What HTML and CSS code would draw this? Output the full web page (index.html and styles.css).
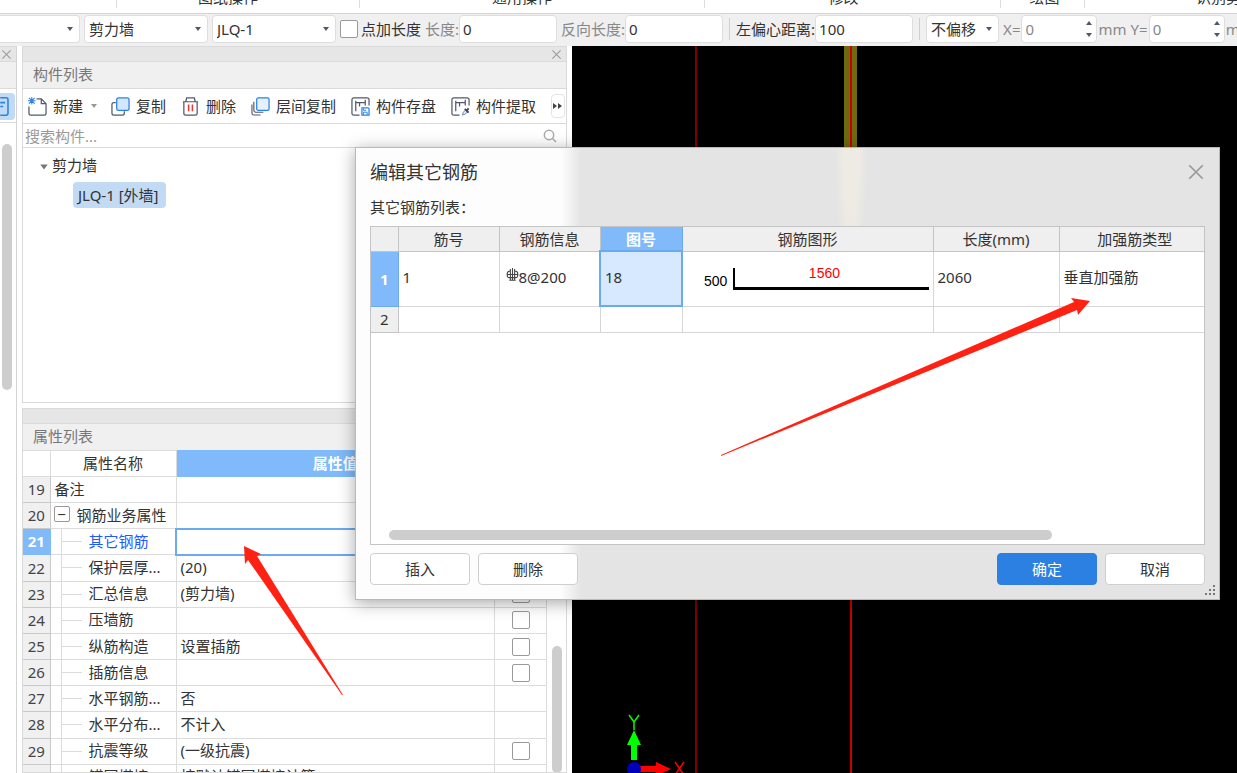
FILE: index.html
```html
<!DOCTYPE html>
<html lang="zh-CN">
<head>
<meta charset="utf-8">
<title>编辑其它钢筋</title>
<link rel="stylesheet" href="styles.css">
</head>
<body>
<svg class="defs" aria-hidden="true">
  <symbol id="down" viewBox="0 0 8 6"><path d="M1 1h6L4 5z" fill="currentColor"/></symbol>
  <symbol id="up" viewBox="0 0 8 6"><path d="M1 5h6L4 1z" fill="currentColor"/></symbol>
  <symbol id="close" viewBox="0 0 16 16"><path d="M2 2l12 12M14 2L2 14" fill="none" stroke="currentColor" stroke-width="1.5"/></symbol>
</svg>

<div class="ribbon">
  <div class="group g1"></div>
  <div class="group g2">图纸操作</div>
  <div class="group g3">通用操作</div>
  <div class="group g4">修改</div>
  <div class="group g5">绘图</div>
  <div class="group g6">识别剪力墙</div>
</div>

<div class="options">
  <div class="combo floor"><select aria-label="楼层"><option></option></select><svg><use href="#down"/></svg></div>
  <div class="combo kind"><select aria-label="构件类型"><option>剪力墙</option></select><svg><use href="#down"/></svg></div>
  <div class="combo kind"><select aria-label="构件"><option>JLQ-1</option></select><svg><use href="#down"/></svg></div>
  <label class="check"><input type="checkbox">点加长度</label>
  <label class="field dim">长度:<input type="text" value="0"></label>
  <label class="field dim">反向长度:<input type="text" value="0"></label>
  <span class="sep"></span>
  <label class="field">左偏心距离:<input type="text" value="100"></label>
  <span class="sep"></span>
  <div class="combo shift"><select aria-label="偏移"><option>不偏移</option></select><svg><use href="#down"/></svg></div>
  <label class="spin">X=<span class="spinbox"><input type="text" value="0"><span class="steps"><svg><use href="#up"/></svg><svg><use href="#down"/></svg></span></span>mm</label>
  <label class="spin">Y=<span class="spinbox"><input type="text" value="0"><span class="steps"><svg><use href="#up"/></svg><svg><use href="#down"/></svg></span></span>mm</label>
</div>

<div class="workspace">
  <aside class="dock">
    <div class="grip"><button class="x" aria-label="关闭"><svg><use href="#close"/></svg></button></div>
    <div class="caption"></div>
    <div class="dock-tools"><button class="active" aria-label="列表"><svg viewBox="0 0 15 28"><path d="M0 5h6q2 0 2 2v14q0 2-2 2H0M0 10h5M0 14h3" fill="none" stroke="#2a82e4" stroke-width="1.6"/></svg></button></div>
    <div class="dock-body"><span class="thumb"></span></div>
  </aside>

  <div class="panels">
    <section class="panel components">
      <div class="grip"><button class="x" aria-label="关闭"><svg><use href="#close"/></svg></button></div>
      <h2 class="caption">构件列表</h2>
      <div class="tools">
        <button><svg viewBox="0 0 20 20"><path d="M1 10v7q0 2 2 2h14q2 0 2-2V7l-5-5H9M14 2v5h5" fill="none" stroke="#51586a" stroke-width="1.3"/><path d="M1 1l6 6M7 1L1 7M4 0v8M0 4h8" stroke="#2a82e4" stroke-width="1.1"/></svg>新建</button>
        <svg class="more"><use href="#down"/></svg>
        <button><svg viewBox="0 0 20 20"><path d="M5 6H3q-2 0-2 2v9q0 2 2 2h9q2 0 2-2v-2" fill="none" stroke="#51586a" stroke-width="1.3"/><rect x="6" y="1" width="13" height="13" rx="2" fill="#d5e7fc" stroke="#2a82e4" stroke-width="1.3"/></svg>复制</button>
        <button><svg viewBox="0 0 20 20"><path d="M2 5h16M5 5l1-4h8l1 4M3 5v12q0 2 2 2h10q2 0 2-2V5" fill="none" stroke="#51586a" stroke-width="1.3"/><path d="M8 8v7M12 8v7" stroke="#e33" stroke-width="1.6"/></svg>删除</button>
        <button><svg viewBox="0 0 20 20"><path d="M3 5v9q0 2 2 2h8M1 8v9q0 2 2 2h7" fill="none" stroke="#51586a" stroke-width="1.2"/><rect x="6" y="1" width="13" height="13" rx="1.5" fill="#e6f1fd" stroke="#2a82e4" stroke-width="1.3"/></svg>层间复制</button>
        <button><svg viewBox="0 0 20 20"><path d="M9 19H3q-2 0-2-2V3q0-2 2-2h14q2 0 2 2v6M5 4v11M5 6h10M15 3v6M9 6v4" fill="none" stroke="#51586a" stroke-width="1.3"/><path d="M11.500 11.500h6.500l1 1v6.500h-7.500z" fill="#fff" stroke="#2a82e4" stroke-width="1.300"/><path d="M13 19v-3h4v3M13 12v2h3" fill="none" stroke="#2a82e4"/></svg>构件存盘</button>
        <button><svg viewBox="0 0 20 20"><path d="M9 19H3q-2 0-2-2V3q0-2 2-2h14q2 0 2 2v6M5 4v11M5 6h10M15 3v6M9 6v4" fill="none" stroke="#51586a" stroke-width="1.3"/><path d="M12 19l1-3 3-3 2 2-3 3z" fill="#dceafb" stroke="#6b86b0"/><path d="M14.500 12.500l4 4M16.500 14.500l2-2.500" stroke="#3f4658" stroke-width="2"/></svg>构件提取</button>
        <button class="overflow" aria-label="更多"><svg viewBox="0 0 10 6"><path d="M0 0l4 3-4 3zM5 0l4 3-4 3z" fill="#444"/></svg></button>
      </div>
      <div class="search"><input type="text" placeholder="搜索构件..." aria-label="搜索构件"><svg viewBox="0 0 14 14"><circle cx="6" cy="6" r="4.700" fill="none" stroke="#aaa" stroke-width="1.500"/><path d="M9.500 9.500L13 13" stroke="#aaa" stroke-width="1.500"/></svg></div>
      <ul class="tree">
        <li><svg class="twisty"><use href="#down"/></svg>剪力墙
          <ul><li><span class="picked">JLQ-1 [外墙]</span></li></ul>
        </li>
      </ul>
    </section>

    <section class="panel props">
      <div class="grip"></div>
      <h2 class="caption">属性列表</h2>
      <div class="prop-body">
        <table class="prop-table">
          <colgroup><col class="c-num"><col class="c-name"><col><col class="c-add"></colgroup>
          <thead><tr><th></th><th>属性名称</th><th class="on">属性值</th><th>附加</th></tr></thead>
          <tbody>
            <tr><th>19</th><td>备注</td><td></td><td></td></tr>
            <tr><th>20</th><td><button class="fold" aria-label="折叠">−</button>钢筋业务属性</td><td></td><td></td></tr>
            <tr class="current"><th>21</th><td class="child">其它钢筋</td><td class="edit"></td><td></td></tr>
            <tr><th>22</th><td class="child">保护层厚...</td><td>(20)</td><td><input type="checkbox" aria-label="保护层厚"></td></tr>
            <tr><th>23</th><td class="child">汇总信息</td><td>(剪力墙)</td><td><input type="checkbox" aria-label="汇总信息"></td></tr>
            <tr><th>24</th><td class="child">压墙筋</td><td></td><td><input type="checkbox" aria-label="压墙筋"></td></tr>
            <tr><th>25</th><td class="child">纵筋构造</td><td>设置插筋</td><td><input type="checkbox" aria-label="纵筋构造"></td></tr>
            <tr><th>26</th><td class="child">插筋信息</td><td></td><td><input type="checkbox" aria-label="插筋信息"></td></tr>
            <tr><th>27</th><td class="child">水平钢筋...</td><td>否</td><td></td></tr>
            <tr><th>28</th><td class="child">水平分布...</td><td>不计入</td><td></td></tr>
            <tr><th>29</th><td class="child">抗震等级</td><td>(一级抗震)</td><td><input type="checkbox" aria-label="抗震等级"></td></tr>
            <tr><th>30</th><td class="child">锚固搭接</td><td>按默认锚固搭接计算</td><td></td></tr>
          </tbody>
        </table>
        <div class="track"><span class="thumb"></span></div>
      </div>
    </section>
  </div>

  <main class="canvas">
    <span class="axis a1"></span>
    <span class="wall"></span>
    <span class="axis a2"></span>
    <svg class="ucs" viewBox="0 0 60 60">
      <path d="M12 45V24" stroke="#0f0" stroke-width="6"/><path d="M5 30L12 15l7 15z" fill="#0f0"/>
      <path d="M18 54h20" stroke="#f00" stroke-width="6"/><path d="M34 47l15 7-15 7z" fill="#f00"/>
      <circle cx="12" cy="54" r="7" fill="#00b"/>
      <path d="M7 0l5 7 5-7M12 7v8" fill="none" stroke="#0f0" stroke-width="1.500"/>
      <path d="M53 47l9 13M62 47l-9 13" fill="none" stroke="#f00" stroke-width="1.500"/>
    </svg>
  </main>
</div>

<div class="dialog" role="dialog" aria-labelledby="dlg-title">
  <header><h1 id="dlg-title">编辑其它钢筋</h1><button class="x" aria-label="关闭"><svg><use href="#close"/></svg></button></header>
  <p>其它钢筋列表：</p>
  <div class="frame">
    <table class="bars">
      <colgroup><col class="b-num"><col class="b-id"><col class="b-id"><col class="b-fig"><col><col class="b-len"><col class="b-type"></colgroup>
      <thead><tr><th></th><th>筋号</th><th>钢筋信息</th><th class="on">图号</th><th>钢筋图形</th><th>长度(mm)</th><th>加强筋类型</th></tr></thead>
      <tbody>
        <tr class="tall"><th class="on">1</th><td>1</td>
          <td><svg class="rebar" viewBox="0 0 12 14"><path d="M4 3H3Q1 3 1 6t2 3h6q2 0 2-3T9 3H8M4 1v10M6 0v12M8 1v10M1 6h10M3 11.500h6" stroke="#444" fill="none"/></svg>8@200</td>
          <td class="cell-on">18</td>
          <td class="shape"><div class="bar"><span class="hook">500</span><span class="run">1560</span></div></td>
          <td>2060</td><td>垂直加强筋</td></tr>
        <tr><th>2</th><td></td><td></td><td></td><td></td><td></td><td></td></tr>
      </tbody>
    </table>
    <div class="hscroll"><span></span></div>
  </div>
  <footer>
    <button>插入</button><button>删除</button><span class="grow"></span><button class="primary">确定</button><button>取消</button>
  </footer>
  <svg class="resize" viewBox="0 0 12 12"><path d="M8 0h2v2H8zM4 4h2v2H4zM8 4h2v2H8zM0 8h2v2H0zM4 8h2v2H4zM8 8h2v2H8z" fill="#777"/></svg>
</div>

<svg class="marks" aria-hidden="true">
  <path d="M721 455L1074 302l-3-4 19 3-12 14-1-5L721 456zM244 546l17 8-4 2 86 139h-1L248 560l-3 4z" fill="#ff2213"/>
</svg>
</body>
</html>
```

FILE: styles.css
```css
* { box-sizing: border-box; }
body {
  margin: 0; height: 100vh; display: flex; flex-direction: column; overflow: hidden; position: relative;
  font: 15px/20px "Noto Sans", "Noto Sans CJK SC", sans-serif; color: #333; background: #fff;
}
button, input, select { font: inherit; color: inherit; margin: 0; }
button { border: 0; background: none; padding: 0; }
h1, h2, p, ul { margin: 0; padding: 0; font-weight: 400; list-style: none; }
.defs { position: absolute; width: 0; height: 0; }

.ribbon { display: flex; height: 14px; flex: none; align-items: flex-end; overflow: hidden; border-bottom: 1px solid #d4d4d4; padding-bottom: 5px; }
.group { height: 20px; border-right: 1px solid #dcdcdc; text-align: center; flex: none; line-height: 18px; white-space: nowrap; }
.g1 { width: 117px; } .g2 { width: 243px; padding-right: 20px; } .g3 { width: 345px; padding-right: 20px; }
.g4 { width: 296px; padding-right: 18px; } .g5 { width: 84px; padding-left: 4px; } .g6 { width: 186px; text-align: left; padding-left: 111px; }

.options { display: flex; flex: none; align-items: center; height: 32px; background: #f0f0f0; gap: 4px; overflow: hidden; white-space: nowrap; padding-bottom: 2px; }
.options > * { flex: none; }
.combo { position: relative; height: 28px; }
.combo select { appearance: none; width: 100%; height: 100%; border: 1px solid #dedede; border-radius: 4px; background: #fff; padding: 0 4px; }
.combo svg { position: absolute; right: 6px; top: 11px; width: 8px; height: 6px; color: #51586a; pointer-events: none; }
.floor { width: 80px; } .floor select { border-left: 0; border-radius: 0 4px 4px 0; }
.kind { width: 124px; } .shift { width: 73px; }
.check { display: flex; align-items: center; gap: 3px; }
input[type=checkbox] { appearance: none; width: 18px; height: 18px; border: 1px solid #999; border-radius: 2px; background: #fff; }
.field { display: flex; align-items: center; }
.dim { color: #888; }
.field input { width: 98px; height: 28px; border: 1px solid #dedede; border-radius: 4px; background: #fff; padding: 0 3px; color: #333; }
.sep { width: 1px; height: 22px; background: #cfcfcf; margin: 0 2px; }
.spin { display: flex; align-items: center; color: #888; gap: 1px; }
.spinbox { display: flex; width: 76px; height: 28px; border: 1px solid #dedede; border-radius: 4px; background: #fff; align-items: center; padding: 0 3px; }
.spinbox input { flex: 1; min-width: 0; border: 0; padding: 0; background: none; }
.steps { display: flex; flex-direction: column; gap: 6px; color: #51586a; }
.steps svg { width: 8px; height: 6px; display: block; }

.workspace { flex: 1; min-height: 0; display: flex; }
.grip { height: 16px; flex: none; background: #e6e6e6; border: 1px solid #dadada; border-width: 1px 0; display: flex; justify-content: flex-end; align-items: center; }
.x { display: flex; color: #999; }
.grip .x svg { width: 11px; height: 11px; }
.grip .x { margin-right: 4px; }
.caption { height: 27px; flex: none; background: #f0f0f0; color: #777; font-size: 15px; line-height: 24px; padding-left: 10px; border-bottom: 1px solid #dadada; }
.dock { width: 17px; flex: none; display: flex; flex-direction: column; border-right: 1px solid #d4d4d4; }
.dock-tools { height: 34px; border-bottom: 1px solid #dadada; padding-top: 4px; }
.active { display: block; width: 15px; height: 27px; background: #c2daf3; border-radius: 0 4px 4px 0; }
.active svg { display: block; width: 15px; height: 27px; }
.dock-body { flex: 1; padding: 21px 0 0 2px; }
.thumb { display: block; width: 10px; border-radius: 5px; background: #cdcdcd; }
.dock .thumb { height: 246px; }

.panels { width: 45%; max-width: 545px; flex: none; margin: 0 5px; display: flex; flex-direction: column; gap: 5px; }
.panel { border: 1px solid #dadada; border-top: 0; display: flex; flex-direction: column; }
.components { height: 357px; flex: none; }
.tools { height: 35px; flex: none; display: flex; align-items: center; border-bottom: 1px solid #dadada; padding: 0 1px 0 5px; white-space: nowrap; overflow: hidden; }
.tools button { display: flex; align-items: center; gap: 6px; flex: none; margin-right: 15px; }
.tools button svg { width: 19px; height: 19px; }
.tools button:first-child { margin-right: 7px; }
.more { width: 8px; height: 6px; margin-right: 13px; color: #999; flex: none; }
.tools .overflow { height: 24px; border: 1px solid #e4e4e4; border-radius: 4px; padding: 0 1px; margin: 0; }
.tools .overflow svg { width: 10px; height: 6px; }
.search { height: 24px; flex: none; display: flex; align-items: center; border-bottom: 1px solid #dadada; padding: 0 9px 0 2px; }
.search input { flex: 1; border: 0; padding: 0; outline: 0; min-width: 0; }
.search input::placeholder { color: #999; }
.search svg { width: 14px; height: 14px; }
.tree { padding: 7px 0 0 16px; }
.tree ul { padding: 7px 0 0 34px; }
.twisty { width: 10px; height: 8px; margin-right: 3px; color: #777; }
.picked { display: inline-block; background: #c2daf3; border-radius: 4px; padding: 3px 7px 3px 5px; }

.props { flex: 1; min-height: 0; overflow: hidden; }
.props .caption { border-bottom: 0; height: 26px; }
.prop-body { display: flex; align-items: flex-start; }
.prop-table { flex: 1; height: 341px; border-collapse: collapse; table-layout: fixed; width: 100%; }
.c-num { width: 27px; } .c-name { width: 126px; } .c-add { width: 52px; }
.prop-table th, .prop-table td { border: 1px solid #dcdcdc; padding: 0 4px 2px; line-height: 20px; height: 26px; font-weight: 400; text-align: left; white-space: nowrap; overflow: hidden; }
.prop-table thead th { text-align: center; }
.prop-table tr > :first-child { border-left: 0; }
.prop-table tbody th { background: #f0f0f0; text-align: center; padding: 0 0 1px; border-color: #c9c9c9; color: #444; }
.prop-table .on, .prop-table .current th { background: #80bafa; color: #fff; font-weight: 700; border-color: #80bafa; }
.prop-table td:last-child { text-align: center; padding: 0; }
.prop-table td input { display: block; margin: 0 auto; }
.prop-table .child { padding-left: 38px; background: linear-gradient(#dcdcdc, #dcdcdc) 11px 12px / 20px 1px no-repeat, linear-gradient(#dcdcdc, #dcdcdc) 10px 0 / 1px 100% no-repeat; }
.current .child { color: #1f5cff; }
.prop-table .edit { border: 2px solid #6aaaee; }
.fold { width: 16px; height: 16px; border: 1px solid #999; border-radius: 2px; line-height: 12px; vertical-align: 1px; margin: 0 7px 0 -1px; }
.track { width: 19px; padding: 196px 0 0 5px; }
.track .thumb { height: 127px; }

.canvas { flex: 1; position: relative; background: #000; overflow: hidden; }
.axis { position: absolute; top: 0; bottom: 0; width: 2px; background: #800000; }
.a1 { left: 123px; } .a2 { left: 278px; background: #c80000; }
.wall { position: absolute; left: 272px; top: 0; width: 13px; height: 180px; background: #6f6a12; }
.ucs { position: absolute; left: 50px; bottom: -2px; width: 60px; height: 60px; overflow: visible; }

.dialog {
  position: absolute; left: 355px; right: 17px; top: 147px; padding: 0 14px 14px; border: 1px solid #b9b9b9;
  background: radial-gradient(ellipse 16px 130px at 495px 0, #edebe3 50%, transparent) no-repeat, linear-gradient(90deg, #fdfdfd 205px, #e4e4e4 225px);
  box-shadow: 0 3px 16px rgba(0, 0, 0, .35);
}
.dialog header { display: flex; justify-content: space-between; align-items: center; height: 48px; }
.dialog h1 { font-size: 18px; line-height: 24px; }
.dialog header svg { width: 18px; height: 18px; }
.dialog p { height: 30px; line-height: 22px; }
.frame { border: 1px solid #c4c4c4; background: #fff; height: 319px; display: flex; flex-direction: column; justify-content: space-between; }
.bars { width: 100%; border-collapse: collapse; table-layout: fixed; }
.b-num { width: 27px; } .b-id { width: 101px; } .b-fig { width: 82px; } .b-len { width: 126px; } .b-type { width: 145px; }
.bars th, .bars td { border: 1px solid #d6d6d6; height: 26px; padding: 0 4px; text-align: left; font-weight: 400; white-space: nowrap; }
.bars td { padding-bottom: 3px; }
.bars th { background: #efefef; text-align: center; border-color: #c4c4c4; }
.bars tr > :first-child { border-left: 0; padding: 0; } .bars tr > :last-child { border-right: 0; }
.bars thead th { border-top: 0; height: 24px; }
.bars thead th:last-child { padding-left: 10px; }
.bars .tall > * { height: 55px; }
.bars th.on { background: #80bafa; color: #fff; font-weight: 700; border-color: #6aaaee; }
.bars .cell-on { background: #d6e9fe; border: 2px solid #6aaaee; }
.rebar { width: 13px; height: 15px; margin-left: 2px; }
.bars .shape { padding-bottom: 0; }
.bar { display: flex; align-items: flex-end; font: 14px/18px "Liberation Sans", Arial, sans-serif; color: #000; padding-left: 17px; }
.hook { padding-right: 6px; }
.run { flex: 1; height: 22px; border: solid #000; border-width: 0 0 3px 2px; color: #f00; text-align: center; line-height: 10px; padding-right: 15px; }
.hscroll { padding: 0 152px 4px 18px; }
.hscroll span { display: block; height: 10px; border-radius: 5px; background: #cdcdcd; }
.dialog footer { display: flex; gap: 8px; padding-top: 8px; }
.dialog footer button { width: 100px; height: 32px; border: 1px solid #cfcfcf; border-radius: 4px; background: #fff; }
.dialog footer .primary { background: #2c80e2; border-color: #2c80e2; color: #fff; }
.grow { flex: 1; }
.resize { position: absolute; right: 2px; bottom: 2px; width: 12px; height: 12px; }
.marks { position: absolute; inset: 0; width: 100%; height: 100%; pointer-events: none; }
```
